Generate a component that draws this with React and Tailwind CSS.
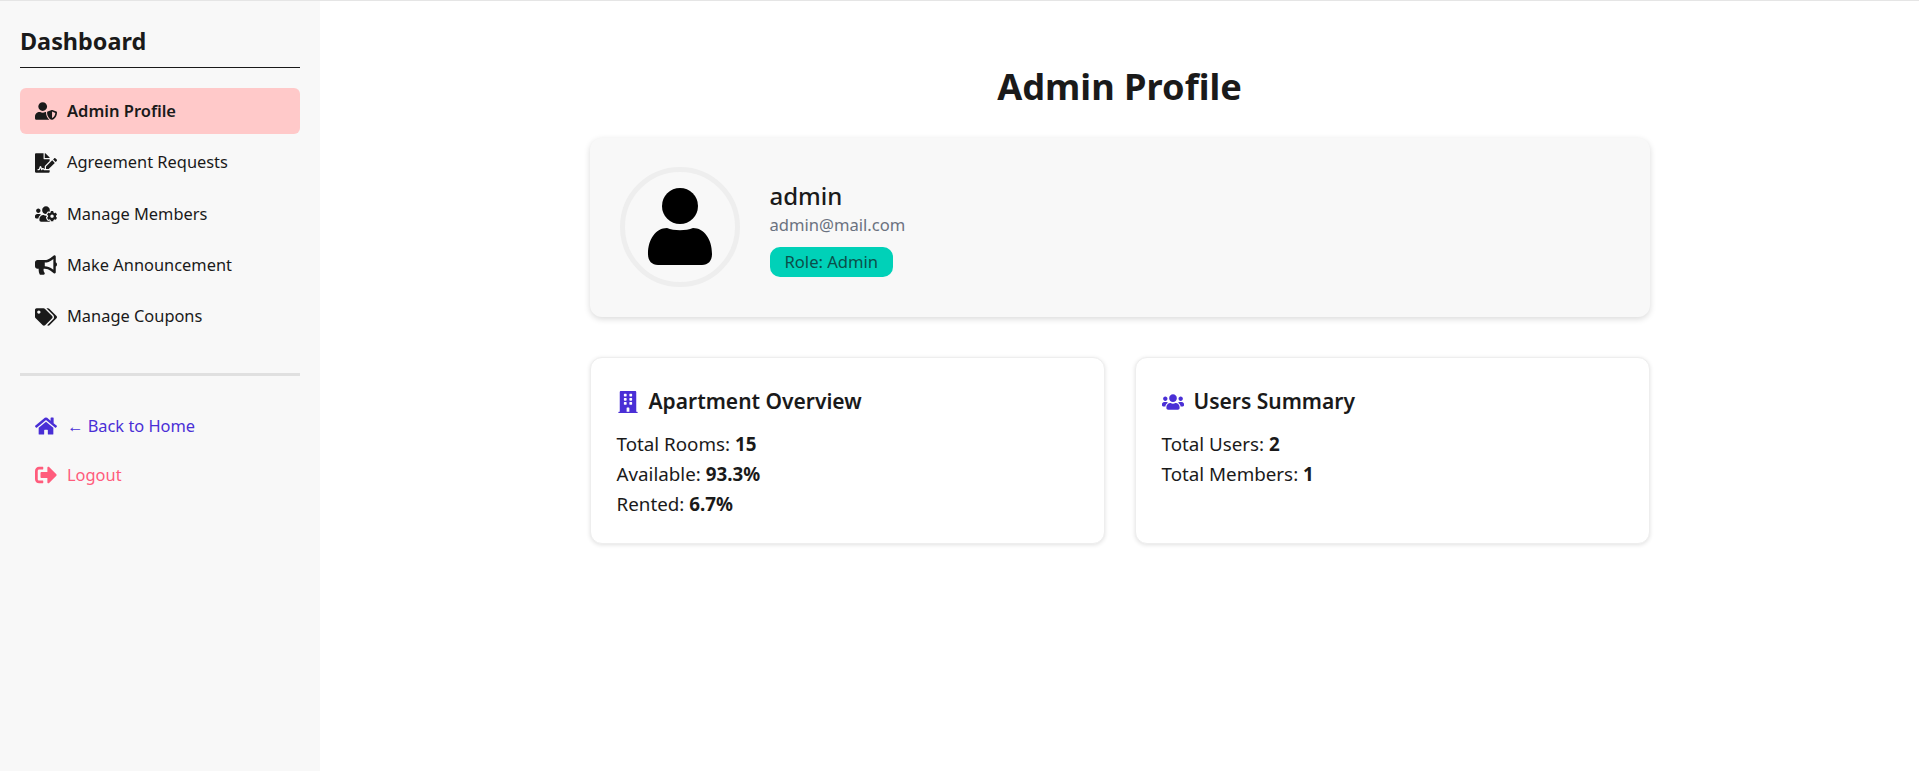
import React from 'react';
import { FaUserShield, FaFileSignature, FaUsersCog, FaBullhorn, FaTags, FaHome, FaSignOutAlt, FaBuilding, FaUsers } from 'react-icons/fa';

const NAV = [
  { label: 'Agreement Requests', icon: FaFileSignature },
  { label: 'Manage Members', icon: FaUsersCog },
  { label: 'Make Announcement', icon: FaBullhorn },
  { label: 'Manage Coupons', icon: FaTags },
];

const Avatar = () => (
  <div className="w-[120px] h-[120px] mb-[2px] rounded-full border-[5px] border-[#eeeeee] flex items-center justify-center shrink-0">
    <svg width="66" height="78" viewBox="0 0 66 78" fill="#000">
      <circle cx="33" cy="18" r="18" />
      <path d="M20 40 C27 43 39 43 46 40 C57 40 65 51 65 66 C65 73 61 77 55 77 L11 77 C5 77 1 73 1 66 C1 51 9 40 20 40 Z" />
    </svg>
  </div>
);

const StatCard = ({ icon: Icon, title, rows }) => (
  <div className="bg-white rounded-xl border border-[#eeeeee] shadow-[0_1px_4px_rgba(0,0,0,0.12)] h-[187px] px-[26px] pt-[27px]">
    <div className="flex items-center gap-[10px] text-[#1a1a1a] h-[34px]">
      <Icon className="text-[#4a2fd6] text-[22px] shrink-0" />
      <h3 className="text-[21px] font-semibold">{title}</h3>
    </div>
    <div className="mt-[10px] text-[18.8px] leading-[30px] text-[#1a1a1a]">
      {rows.map(r => (
        <p key={r[0]}>{r[0]}: <b className="font-bold">{r[1]}</b></p>
      ))}
    </div>
  </div>
);

export default function App() {
  return (
    <div className="min-h-screen h-[771px] flex bg-white border-t border-[#e5e5e5] overflow-hidden text-[#1a1a1a] font-['Noto_Sans','Open_Sans',sans-serif]">
      {/* SIDEBAR */}
      <aside className="w-[320px] shrink-0 bg-[#f8f8f8] px-5 pt-[20px]">
        <h2 className="text-[23.4px] leading-[40px] font-bold border-b border-[#1a1a1a] h-[47px]">Dashboard</h2>

        <nav className="mt-[20px] flex flex-col gap-[5px]">
          <a className="flex items-center gap-[10px] h-[46.4px] px-[15px] rounded-md bg-[#ffc9c9] font-semibold text-[16.5px]">
            <FaUserShield className="text-[22px] shrink-0" />
            Admin Profile
          </a>
          {NAV.map(item => (
            <a key={item.label} className="flex items-center gap-[10px] h-[46.4px] px-[15px] text-[16.4px]">
              <item.icon className="text-[22px] shrink-0" />
              {item.label}
            </a>
          ))}
        </nav>

        <div className="mt-[33px] border-t-[3px] border-[#e0e0e0]" />

        <div className="mt-[27px] flex flex-col gap-[3px]">
          <a className="flex items-center gap-[10px] h-[46px] px-[15px] text-[16.4px] text-[#4a2fd6]">
            <FaHome className="text-[22px] shrink-0" />
            ← Back to Home
          </a>
          <a className="flex items-center gap-[10px] h-[46px] px-[15px] text-[16.4px] text-[#ff5c7c]">
            <FaSignOutAlt className="text-[22px] shrink-0" />
            Logout
          </a>
        </div>
      </aside>

      {/* MAIN */}
      <main className="flex-1 flex flex-col items-center pt-[58px]">
        <h1 className="text-[36.2px] leading-[54px] font-bold text-center">Admin Profile</h1>

        <div className="w-[1060px] mt-[25px]">
          <div className="h-[179px] bg-[#f8f8f8] rounded-xl shadow-[0_2px_6px_rgba(0,0,0,0.15)] flex items-center gap-[30px] px-[30px]">
            <Avatar />
            <div className="mt-[1px]">
              <h2 className="text-[24px] leading-[32px] font-medium">admin</h2>
              <p className="text-[16.6px] leading-[25px] text-[#6b7280]">admin@mail.com</p>
              <span className="inline-block mt-[10px] h-[30px] leading-[30px] px-[15px] rounded-[10px] bg-[#00d1b8] text-[#0b4f4a] text-[16.6px]">Role: Admin</span>
            </div>
          </div>

          <div className="grid grid-cols-2 gap-[30px] mt-[40px]">
            <StatCard icon={FaBuilding} title="Apartment Overview" rows={[['Total Rooms', '15'], ['Available', '93.3%'], ['Rented', '6.7%']]} />
            <StatCard icon={FaUsers} title="Users Summary" rows={[['Total Users', '2'], ['Total Members', '1']]} />
          </div>
        </div>
      </main>
    </div>
  );
}
